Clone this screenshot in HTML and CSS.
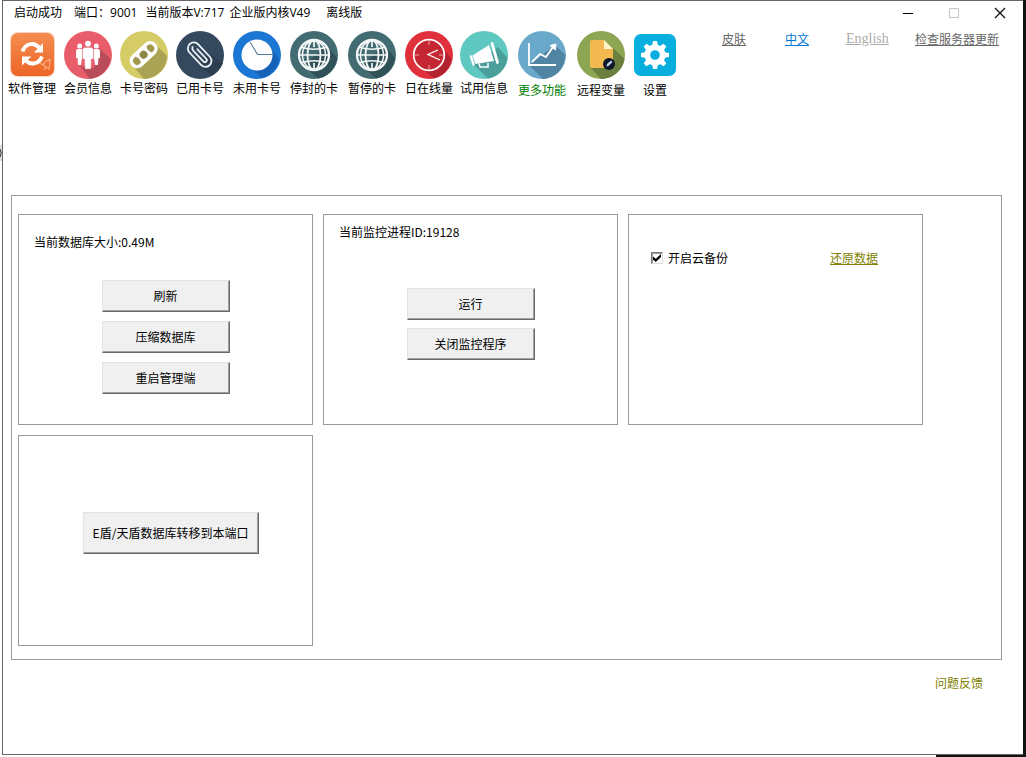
FILE: index.html
```html
<!DOCTYPE html>
<html lang="zh-CN">
<head>
<meta charset="utf-8">
<title>启动成功</title>
<link rel="stylesheet" href="styles.css">
</head>
<body>
<svg class="edge-mark" width="2" height="16" viewBox="0 0 2 16" aria-hidden="true"><path d="M0 0H2V16H0Z" fill="#ddd"/><path d="M0 4Q2.500 8 0 12" fill="none" stroke="#333"/></svg>
<div class="window">
  <header class="titlebar">
    <h1 class="title"><span>启动成功</span><span>端口：9001</span><span class="version">当前版本V:717 <span>企业版内核V49</span></span><span>离线版</span></h1>
    <div class="controls">
      <button type="button" aria-label="最小化"><svg width="12" height="12" viewBox="0 0 12 12"><path d="M1 6.500H11" stroke="#000"/></svg></button>
      <button type="button" aria-label="最大化" disabled><svg width="12" height="12" viewBox="0 0 12 12"><path d="M1.500 1.500H10.500V10.500H1.500Z" fill="none" stroke="#c4c4c4"/></svg></button>
      <button type="button" aria-label="关闭"><svg width="12" height="12" viewBox="0 0 12 12"><path d="M1 1L11 11M11 1L1 11" stroke="#111" stroke-width="1.300"/></svg></button>
    </div>
  </header>

  <div class="topbar">
    <nav class="tools">
      <button type="button" class="tool">
        <svg viewBox="0 0 48 48"><defs><linearGradient id="og" x2="0" y2="1"><stop offset="0" stop-color="#f58d50"/><stop offset="1" stop-color="#ec6527"/></linearGradient></defs>
          <rect x="2" y="1" width="45" height="45" rx="8" fill="#fbd3bb"/><rect x="3" y="2" width="43" height="43" rx="7" fill="url(#og)"/>
          <g fill="none" stroke="#fff" stroke-width="3.800"><path d="M14.500 20.500C17 12.500 26 10.500 31 16.500"/><path d="M34 25.500C31 33.500 22 34.500 17.500 29"/></g>
          <path d="M35 12V21.500H26ZM14 34.500V25.500H23.500Z" fill="#fff"/>
          <path d="M42 28q-6 3-7 6l6 4q1-5 1-10M35 34l-3-2M38 36l-2 3" fill="none" stroke="#ffab80" stroke-width="1.200"/></svg>
        <span>软件管理</span></button>
      <button type="button" class="tool">
        <svg viewBox="0 0 48 48"><circle cx="24" cy="24" r="24" fill="#e95d6b"/><path d="M35 17L46.500 28A24 24 0 0 1 26 47.900L16 35L30 37Z" fill="#b84c58"/>
          <g fill="#fff"><circle cx="15.700" cy="15" r="2.500"/><circle cx="32.300" cy="15" r="2.500"/><circle cx="24" cy="12.700" r="2.900"/><path d="M12 20q0-2 2-2h4v9l-1 7h-3l-.500-7H12ZM36 20q0-2-2-2h-4v9l1 7h3l.500-7H36Z"/></g>
          <path d="M18.500 19q0-2.500 2.500-2.500h6q2.500 0 2.500 2.500v9h-2.200L27 38h-6l-.500-10h-2Z" fill="#fff" stroke="#df7c87" stroke-width=".500"/></svg>
        <span>会员信息</span></button>
      <button type="button" class="tool">
        <svg viewBox="0 0 48 48"><circle cx="24" cy="24" r="24" fill="#d5cc68"/><path d="M36 14L47 25A24 24 0 0 1 24 48L14 36Z" fill="#aaa354"/>
          <g transform="rotate(-43 24 24)"><rect x="7.500" y="16" width="33" height="15" rx="7.500" fill="#fff"/><circle cx="24" cy="23.500" r="4" fill="#8e8845"/><path d="M16.500 19.500H15A4 4 0 0 0 15 27.500H16.500Q19 23.500 16.500 19.500ZM31.500 19.500H33A4 4 0 0 1 33 27.500H31.500Q29 23.500 31.500 19.500Z" fill="#a19a4e"/></g></svg>
        <span>卡号密码</span></button>
      <button type="button" class="tool">
        <svg viewBox="0 0 48 48"><circle cx="24" cy="24" r="24" fill="#34495e"/><path d="M33 22L47 32A24 24 0 0 1 35 45L22 32Z" fill="#2c3e50"/>
          <g transform="rotate(-43 24 24)" fill="none" stroke="#eef4f8" stroke-width="1.800" stroke-linecap="round"><path d="M30 17V32A6 6 0 0 1 18 32V15A6 6 0 0 1 30 15V17M26 18V31A2 2 0 0 1 22 31V16A4 4 0 0 1 24 13"/></g></svg>
        <span>已用卡号</span></button>
      <button type="button" class="tool">
        <svg viewBox="0 0 48 48"><circle cx="24" cy="24" r="24" fill="#1c76d4"/><path d="M35 13L46 28A24 24 0 0 1 29 47L17 37Z" fill="#1562b6"/><circle cx="24" cy="24" r="15.500" fill="#fff"/><path d="M17 11L24.500 23.500H39.500" fill="none" stroke="#557c9e" stroke-width="1.100"/></svg>
        <span>未用卡号</span></button>
      <button type="button" class="tool">
        <svg viewBox="0 0 48 48"><circle cx="24" cy="24" r="24" fill="#426c72"/><path d="M36 14L47 27A24 24 0 0 1 28 47.500L14 35Z" fill="#315159"/><g id="globe" fill="none" stroke="#f4f8f8"><circle cx="24" cy="24" r="15" stroke-width="2.300"/><ellipse cx="24" cy="24" rx="6.500" ry="15" stroke-width="1.800"/><ellipse cx="24" cy="24" rx="11.500" ry="14" stroke-width="1.500"/><path d="M9 24H39M12 16.500Q24 20 36 16.500M12 31.500Q24 28 36 31.500M24 9V16M24 32V39" stroke-width="1.700"/></g></svg>
        <span>停封的卡</span></button>
      <button type="button" class="tool">
        <svg viewBox="0 0 48 48"><circle cx="24" cy="24" r="24" fill="#426c72"/><path d="M36 14L47 27A24 24 0 0 1 28 47.500L14 35Z" fill="#315159"/><use href="#globe"/></svg>
        <span>暂停的卡</span></button>
      <button type="button" class="tool">
        <svg viewBox="0 0 48 48"><circle cx="24" cy="24" r="24" fill="#df303c"/><path d="M35 13L46.500 28A24 24 0 0 1 29 47.500L14 35Z" fill="#b3232f"/><circle cx="24" cy="24" r="15.300" fill="#c42632" stroke="#fff" stroke-width="1.700"/><path d="M24 10V14M24 34V38M10 24H14M34 24H38" stroke="#e8a1a6" stroke-width="1"/><path d="M33 19L23 23.500L35 29" fill="none" stroke="#fff" stroke-width="1.300"/></svg>
        <span>日在线量</span></button>
      <button type="button" class="tool">
        <svg viewBox="0 0 48 48"><circle cx="24" cy="24" r="24" fill="#5fc8c0"/><path d="M38 16L47.500 27A24 24 0 0 1 28 47.500L14 34Z" fill="#4b9f9a"/>
          <path d="M12.500 24.500L29 14L34 30L15.500 33Z" fill="#fff"/><path d="M32 12.500L37.500 31.500" stroke="#fff" stroke-width="2.800" stroke-linecap="round"/><path d="M11 25.500L13.500 33.500" stroke="#fff" stroke-width="2.500" stroke-linecap="round"/><path d="M19 32.500L20 36H28V32" fill="none" stroke="#fff" stroke-width="1.500"/></svg>
        <span>试用信息</span></button>
      <button type="button" class="tool tool-low tool-active">
        <svg viewBox="0 0 48 48"><circle cx="24" cy="24" r="24" fill="#6ba9ca"/><path d="M37 14L47.300 24A24 24 0 0 1 25 48L11 34Z" fill="#5183a3"/><path d="M11 12V34H38M14 31L22 23L28 26L35 16" fill="none" stroke="#fff" stroke-width="1.800"/><path d="M32 14.500L38 13L37.500 19Z" fill="#fff" stroke="#fff" stroke-width="1"/></svg>
        <span>更多功能</span></button>
      <button type="button" class="tool tool-low">
        <svg viewBox="0 0 48 48"><circle cx="24" cy="24" r="24" fill="#8da653"/><path d="M36 17L47.500 28A24 24 0 0 1 24 48L13 36Z" fill="#6b803e"/><path d="M13 11q0-2 2-2H27L36 18V37H15q-2 0-2-2Z" fill="#f2b950"/><path d="M27 9L36 18H27Z" fill="#fff1cb"/><circle cx="32" cy="33" r="6" fill="#11172a"/><path d="M29.500 35.500L30 33L34 29.500L35.500 31L31.500 35Z" fill="#bcd5ef"/></svg>
        <span>远程变量</span></button>
      <button type="button" class="tool tool-low">
        <svg viewBox="0 0 48 48"><rect x="3" y="3" width="42" height="42" rx="7" fill="#08aede"/><g fill="#fff"><circle cx="24" cy="24" r="10.500"/><g id="teeth"><path d="M21 15L22 10H26L27 15ZM21 33L22 38H26L27 33Z"/><path d="M15 21L10 22V26L15 27ZM33 21L38 22V26L33 27Z"/></g><use href="#teeth" transform="rotate(45 24 24)"/></g><circle cx="24" cy="24" r="4.800" fill="#08aede"/></svg>
        <span>设置</span></button>
    </nav>
    <nav class="links">
      <a href="#skin">皮肤</a>
      <a href="#zh" class="link-current">中文</a>
      <a href="#en" class="link-en">English</a>
      <a href="#update">检查服务器更新</a>
    </nav>
  </div>

  <main class="group">
    <section class="panel panel-db">
      <p>当前数据库大小:0.49M</p>
      <div class="actions"><button type="button" class="btn">刷新</button><button type="button" class="btn">压缩数据库</button><button type="button" class="btn">重启管理端</button></div>
    </section>
    <section class="panel panel-monitor">
      <p>当前监控进程ID:19128</p>
      <div class="actions"><button type="button" class="btn">运行</button><button type="button" class="btn">关闭监控程序</button></div>
    </section>
    <section class="panel panel-backup">
      <label class="check"><input type="checkbox" checked>开启云备份</label>
      <a href="#restore" class="restore">还原数据</a>
    </section>
    <section class="panel panel-move">
      <button type="button" class="btn btn-large">E盾/天盾数据库转移到本端口</button>
    </section>
  </main>
  <footer class="footer"><a href="#feedback">问题反馈</a></footer>
</div>
</body>
</html>
```

FILE: styles.css
```css
* { box-sizing: border-box; }

body {
  margin: 0;
  min-height: 100vh;
  padding: 0 3px 2px 2px;
  background: linear-gradient(to right, #fff calc(100% - 90px), #111214 0);
  color: #000;
  font: 12px/16px "Noto Sans CJK SC", sans-serif;
}

button {
  margin: 0;
  padding: 0;
  border: 0;
  background: none;
  color: inherit;
  font: inherit;
}

svg { display: block; }

.edge-mark {
  position: absolute;
  left: 0;
  top: 145px;
}

.window {
  display: flex;
  flex-direction: column;
  min-height: calc(100vh - 2px);
  border: 1px solid #66666a;
  border-right: 0;
  background: #fff;
}

.titlebar {
  display: flex;
  justify-content: space-between;
  height: 24px;
}

.title {
  display: flex;
  align-items: center;
  gap: 12px;
  margin: 0;
  padding-left: 11px;
  font: 12px/16px "Open Sans", "Noto Sans CJK SC", sans-serif;
  white-space: nowrap;
}

.title .version {
  display: flex;
  gap: 5px;
  margin: 0 4px 0 -4px;
}

.controls { display: flex; }

.controls button {
  display: grid;
  place-items: center;
  width: 46px;
}

.topbar {
  display: flex;
  justify-content: space-between;
  padding: 6px 24px 0 1px;
}

.tools {
  display: grid;
  grid-template-columns: repeat(4, 56px) 58px 56px 60px 54px 56px 60px 58px 50px;
}

.tool {
  display: flex;
  flex-direction: column;
  align-items: center;
  white-space: nowrap;
}

.tool svg { width: 48px; height: 48px; }
.tool span { margin-top: 1px; }
.tool-low span { margin-top: 3px; }
.tool-active { color: #008000; }

.links {
  display: grid;
  grid-template-columns: 63px 61px 69px 84px;
  align-items: start;
  white-space: nowrap;
}

.links a { color: #666; }
.links .link-current { color: #0078d7; }
.links .link-en {
  color: #aaa;
  font-family: "Liberation Serif", serif;
  font-size: 14px;
}

.group {
  display: grid;
  grid-template-columns: repeat(3, 295px);
  grid-auto-rows: 211px;
  gap: 10px;
  margin: 97px 21px 0 8px;
  padding: 18px 6px 13px;
  border: 1px solid #999;
}

.panel { border: 1px solid #999; }
.panel p { margin: 0; }

.actions {
  display: flex;
  flex-direction: column;
  align-items: center;
  gap: 8px;
}

.panel-db { padding: 19px 0 0 15px; }
.panel-db .actions { gap: 9px; margin: 30px 15px 0 0; }
.panel-monitor { padding: 9px 0 0 15px; }
.panel-monitor .actions { margin: 48px 15px 0 0; }

.panel-backup {
  display: flex;
  justify-content: space-between;
  align-items: flex-start;
  padding: 35px 44px 0 22px;
}

.panel-move {
  display: flex;
  justify-content: center;
  align-items: flex-start;
  padding: 76px 0 0 10px;
}

.btn {
  width: 128px;
  height: 32px;
  border: 1px solid;
  border-color: #e3e3e3 #696969 #696969 #e3e3e3;
  background: #f0f0f0;
  box-shadow: inset -1px -1px #a0a0a0;
}

.btn-large { width: 176px; height: 42px; }

.check {
  display: flex;
  align-items: center;
  gap: 5px;
}

.check input {
  appearance: none;
  width: 12px;
  height: 12px;
  margin: 0;
  border: 1px solid;
  border-color: #777 #ddd #ddd #777;
  box-shadow: inset 1px 1px #999;
}

.check input:checked::before {
  content: "";
  display: block;
  width: 8px;
  height: 8px;
  margin: 1px;
  background: #000;
  clip-path: polygon(0 30%, 35% 60%, 100% 0, 100% 38%, 35% 100%, 0 68%);
}

.restore { color: #808000; }

.footer {
  display: flex;
  justify-content: flex-end;
  padding: 15px 40px 0 0;
}

.footer a { color: #808000; text-decoration: none; }
```
